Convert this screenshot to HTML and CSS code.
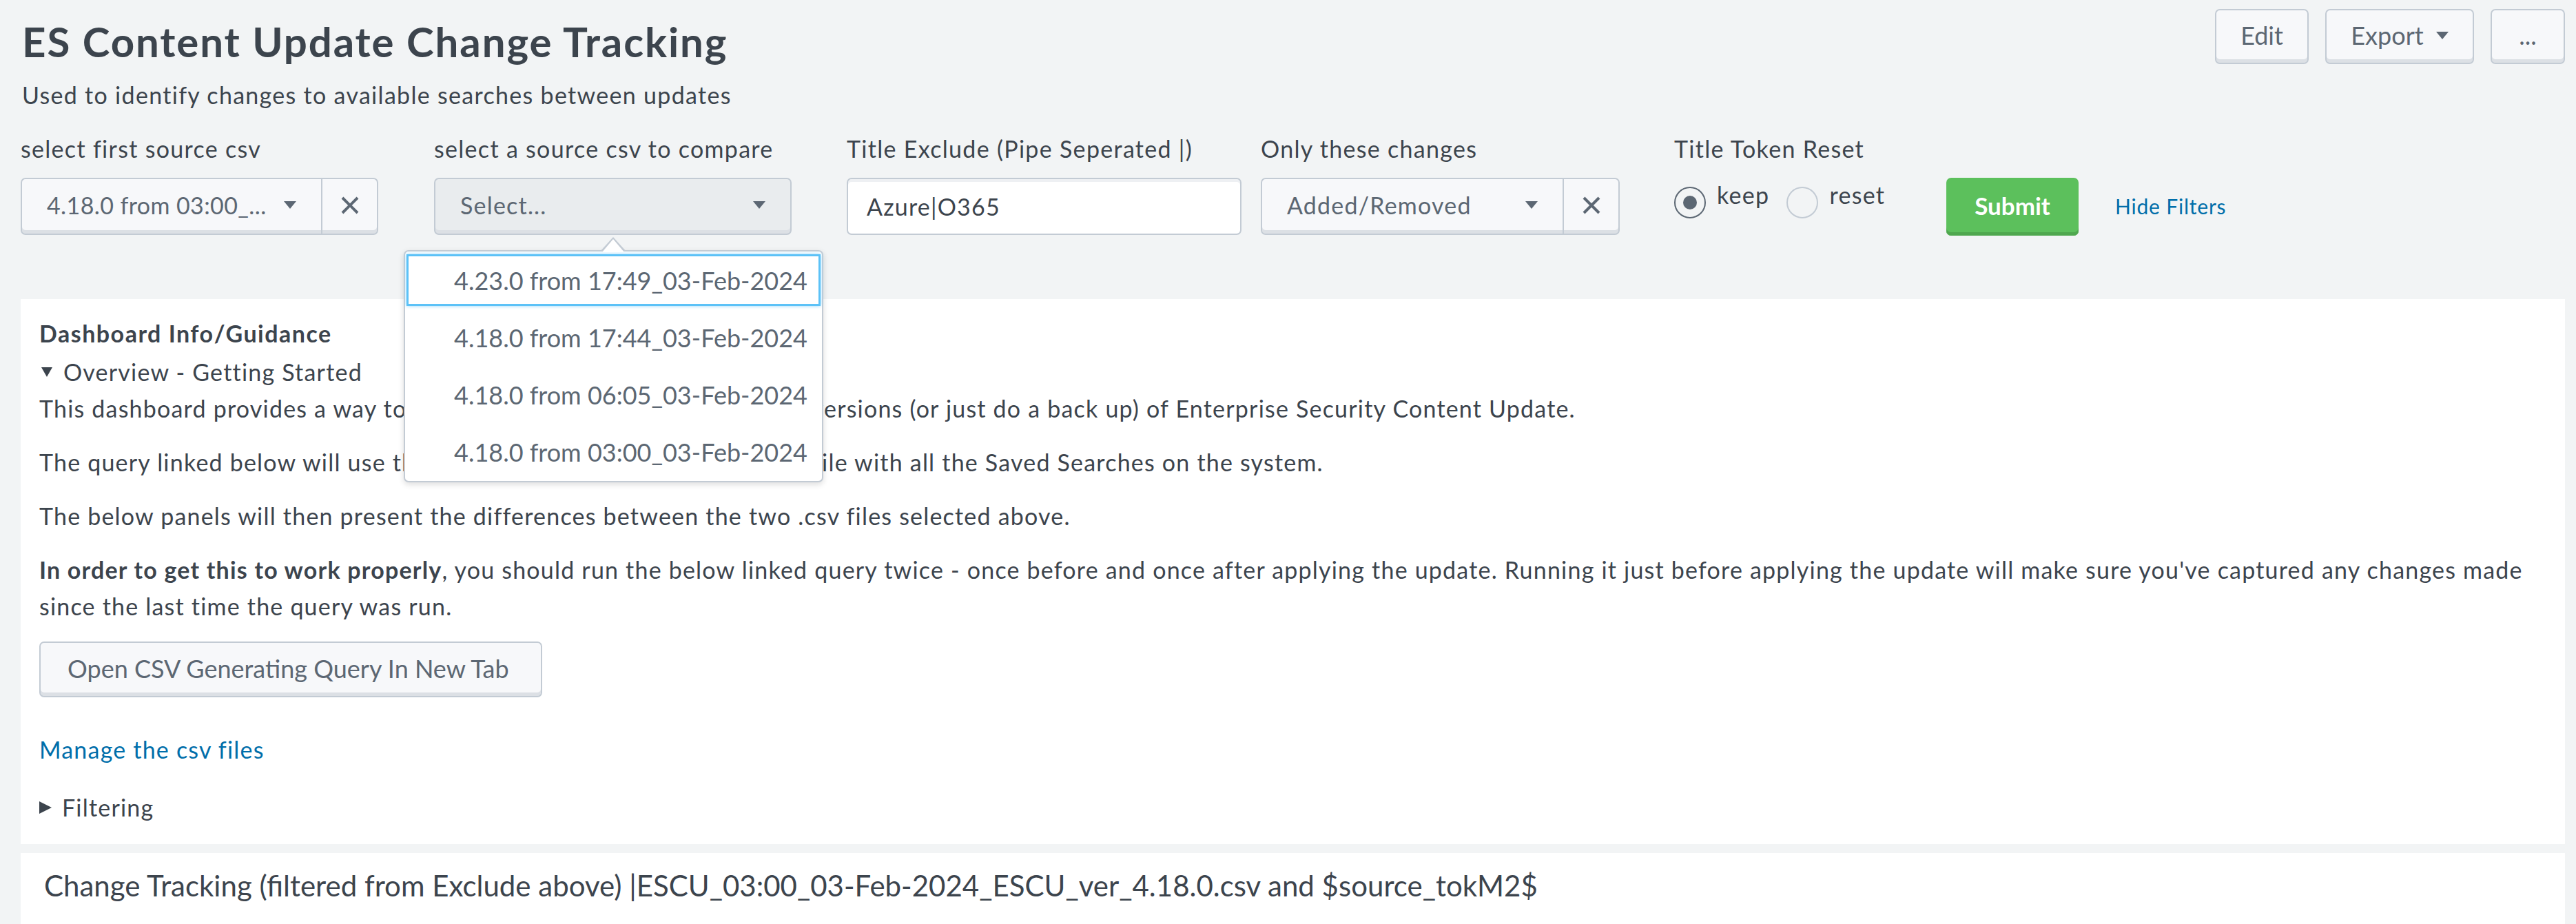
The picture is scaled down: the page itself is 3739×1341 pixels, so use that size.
FILE: index.html
```html
<!DOCTYPE html>
<html lang="en">
<head>
<meta charset="utf-8">
<title>ES Content Update Change Tracking</title>
<link rel="stylesheet" href="styles.css">
</head>
<body>
<div class="page">
  <header class="head">
    <div class="head-text">
      <h1 class="title">ES Content Update Change Tracking</h1>
      <p class="subtitle">Used to identify changes to available searches between updates</p>
    </div>
    <div class="actions">
      <button class="btn btn-edit">Edit</button>
      <button class="btn btn-export">Export <span class="caret"></span></button>
      <button class="btn btn-more">...</button>
    </div>
  </header>

  <div class="filters">
    <div class="field f1">
      <label class="flabel">select first source csv</label>
      <div class="select">
        <div class="sel-main"><span class="sel-text">4.18.0 from 03:00_...</span><span class="caret"></span></div>
        <div class="sel-clear"><svg width="28" height="28" viewBox="0 0 28 28"><path d="M3 3 L25 25 M25 3 L3 25" stroke="#5c6773" stroke-width="4" fill="none"/></svg></div>
      </div>
    </div>
    <div class="field f2">
      <label class="flabel">select a source csv to compare</label>
      <div class="select select-open">
        <div class="sel-main"><span class="sel-text">Select...</span><span class="caret"></span></div>
        <div class="popup">
          <ul class="opts">
            <li class="opt opt-active">4.23.0 from 17:49_03-Feb-2024</li>
            <li class="opt">4.18.0 from 17:44_03-Feb-2024</li>
            <li class="opt">4.18.0 from 06:05_03-Feb-2024</li>
            <li class="opt">4.18.0 from 03:00_03-Feb-2024</li>
          </ul>
        </div>
      </div>
    </div>
    <div class="field f3">
      <label class="flabel">Title Exclude (Pipe Seperated |)</label>
      <div class="text-input">Azure|O365</div>
    </div>
    <div class="field f4">
      <label class="flabel">Only these changes</label>
      <div class="select">
        <div class="sel-main"><span class="sel-text">Added/Removed</span><span class="caret"></span></div>
        <div class="sel-clear"><svg width="28" height="28" viewBox="0 0 28 28"><path d="M3 3 L25 25 M25 3 L3 25" stroke="#5c6773" stroke-width="4" fill="none"/></svg></div>
      </div>
    </div>
    <div class="field f5">
      <label class="flabel">Title Token Reset</label>
      <div class="radios">
        <span class="radio radio-on"></span><span class="rlabel">keep</span>
        <span class="radio"></span><span class="rlabel">reset</span>
      </div>
    </div>
    <button class="submit">Submit</button>
    <a class="hide-filters">Hide Filters</a>
  </div>

  <section class="panel panel-info">
    <h3 class="info-title">Dashboard Info/Guidance</h3>
    <div class="disclosure"><svg class="tri" width="16" height="16" viewBox="0 0 16 16"><path d="M0 1 H16 L8 15 Z" fill="#3c444d"/></svg>Overview - Getting Started</div>
    <p class="para">This dashboard provides a way to review the changes across different versions (or just do a back up) of Enterprise Security Content Update.</p>
    <p class="para">The query linked below will use the | rest command to generate a .csv file with all the Saved Searches on the system.</p>
    <p class="para">The below panels will then present the differences between the two .csv files selected above.</p>
    <p class="para"><strong>In order to get this to work properly</strong>, you should run the below linked query twice - once before and once after applying the update. Running it just before applying the update will make sure you've captured any changes made since the last time the query was run.</p>
    <button class="btn btn-open">Open CSV Generating Query In New Tab</button>
    <a class="manage">Manage the csv files</a>
    <div class="disclosure closed"><svg class="tri" width="18" height="18" viewBox="0 0 18 18"><path d="M0 0 V18 L18 9 Z" fill="#3c444d"/></svg>Filtering</div>
  </section>

  <section class="panel panel-track">
    <h2 class="track-title">Change Tracking (filtered from Exclude above) |ESCU_03:00_03-Feb-2024_ESCU_ver_4.18.0.csv and $source_tokM2$</h2>
  </section>
</div>
</body>
</html>
```

FILE: styles.css
```css
* { box-sizing: border-box; }
html, body { margin: 0; padding: 0; }
body {
  background: #f2f4f5;
  font-family: Lato, "Liberation Sans", sans-serif;
  color: #3c444d;
  font-size: 34px;
  letter-spacing: 1.2px;
}
.page {
  width: 3739px;
  height: 1341px;
  overflow: hidden;
  padding: 0 16px 0 30px;
}

/* header */
.head { display: flex; justify-content: space-between; align-items: flex-start; }
.head-text { padding: 24px 0 0 2px; }
.title { margin: 0; font-size: 60px; line-height: 72px; font-weight: 700; letter-spacing: 1.9px; }
.subtitle { margin: 22px 0 0; line-height: 40px; letter-spacing: 1.3px; }
.actions { display: flex; gap: 24px; padding-top: 13px; }

.btn {
  height: 80px;
  border: 2px solid #c3cbd4;
  border-radius: 7px;
  background: #f7f8fa;
  box-shadow: inset 0 -5px 0 #dce0e5;
  font-family: inherit;
  font-size: 36px;
  letter-spacing: 0;
  color: #5c6773;
  display: inline-flex;
  align-items: center;
  justify-content: center;
  padding: 0 0 4px;
  cursor: pointer;
}
.btn-edit { width: 136px; }
.btn-export { width: 216px; gap: 18px; }
.btn-more { width: 108px; }

.caret {
  display: inline-block;
  flex: none;
  width: 0; height: 0;
  border-left: 9px solid transparent;
  border-right: 9px solid transparent;
  border-top: 11px solid #5c6773;
}

/* filters */
.filters { display: flex; align-items: flex-start; margin-top: 38px; position: relative; z-index: 2; }
.field { display: flex; flex-direction: column; }
.flabel { display: block; line-height: 40px; margin-bottom: 22px; white-space: nowrap; letter-spacing: 1.3px; }
.f1 { width: 519px; margin-right: 81px; }
.f2 { width: 519px; margin-right: 80px; }
.f3 { width: 573px; margin-right: 28px; }
.f4 { width: 521px; margin-right: 79px; }
.f5 { width: 395px; }

.select {
  position: relative;
  display: flex;
  height: 83px;
  border: 2px solid #c3cbd4;
  border-radius: 7px;
  background: #f7f8fa;
  box-shadow: inset 0 -5px 0 #dce0e5;
  color: #5c6773;
}
.select-open { background: #e9ecee; }
.sel-main {
  flex: 1;
  display: flex;
  align-items: center;
  justify-content: space-between;
  padding: 0 36px 4px 36px;
  white-space: nowrap;
}
.f1 .sel-text { letter-spacing: 0.4px; }
.sel-clear {
  width: 81px;
  border-left: 2px solid #c3cbd4;
  display: flex;
  align-items: center;
  justify-content: center;
  padding-bottom: 4px;
}

.text-input {
  height: 83px;
  border: 2px solid #c3cbd4;
  border-radius: 7px;
  background: #fff;
  box-shadow: inset 0 4px 0 #eef0f3;
  display: flex;
  align-items: center;
  padding: 0 0 0 27px;
  color: #3c444d;
}

.radios { display: flex; align-items: flex-start; margin-top: 13px; }
.radio {
  flex: none;
  width: 46px; height: 46px;
  border: 2px solid #c3cbd4;
  border-radius: 50%;
  position: relative;
}
.radio-on { border-color: #5c6773; }
.radio-on::after {
  content: "";
  position: absolute;
  left: 11px; top: 11px;
  width: 20px; height: 20px;
  border-radius: 50%;
  background: #5c6773;
}
.rlabel { line-height: 24px; margin-left: 16px; letter-spacing: 1.3px; }
.radios .radio:nth-of-type(3) { margin-left: 25px; }

.submit {
  margin-top: 62px;
  width: 192px;
  height: 84px;
  border: none;
  border-radius: 7px;
  background: #5cc05c;
  box-shadow: inset 0 -5px 0 #4fa74f;
  color: #fff;
  font-family: inherit;
  font-weight: 700;
  font-size: 35px;
  letter-spacing: 0;
  padding: 0 0 4px;
}
.hide-filters {
  margin: 62px 0 0 53px;
  height: 84px;
  display: flex;
  align-items: center;
  color: #006eaa;
  font-size: 30px;
  letter-spacing: 0.8px;
  padding-bottom: 2px;
}

/* popup */
.popup {
  position: absolute;
  left: -46px;
  top: 103px;
  width: 609px;
  height: 337px;
  background: #fff;
  border: 2px solid #c3cbd4;
  border-radius: 7px;
  box-shadow: 0 3px 8px rgba(0, 0, 0, 0.14);
}
.popup::before, .popup::after {
  content: "";
  position: absolute;
  width: 0; height: 0;
}
.popup::before {
  top: -21px;
  left: 283px;
  border-left: 19px solid transparent;
  border-right: 19px solid transparent;
  border-bottom: 21px solid #c3cbd4;
}
.popup::after {
  top: -18px;
  left: 286px;
  border-left: 16px solid transparent;
  border-right: 16px solid transparent;
  border-bottom: 19px solid #fff;
}
.opts { list-style: none; margin: 0; padding: 0; }
.opt {
  height: 75px;
  margin: 4px 2px 8px;
  display: flex;
  align-items: center;
  padding-left: 69px;
  font-size: 36px;
  letter-spacing: 0;
  color: #5c6773;
  white-space: nowrap;
}
.opt-active {
  border: 3px solid #5cc2f7;
  box-shadow: 0 0 5px #8fd6fb;
  padding-left: 66px;
}

/* panels */
.panel { background: #fff; }
.panel-info { margin-top: 92px; padding: 23px 27px 27px; position: relative; z-index: 1; }
.info-title { margin: 0 0 3px; font-size: 34px; line-height: 53px; font-weight: 700; letter-spacing: 1.5px; }
.disclosure { display: flex; align-items: center; line-height: 53px; }
.disclosure .tri { margin: 0 16px 0 3px; }
.disclosure.closed .tri { margin: 0 15px 0 0; }
.para { margin: 0 0 25px; line-height: 53px; }
.para strong { font-weight: 700; }
.btn-open {
  margin-top: 3px;
  width: 730px;
  height: 81px;
  display: flex;
  justify-content: flex-start;
  padding-left: 39px;
}
.manage { display: block; margin-top: 49px; line-height: 53px; color: #006eaa; }
.panel-info .closed { margin-top: 31px; }

.panel-track { margin-top: 13px; padding: 21px 34px; height: 200px; }
.track-title { margin: 0; font-weight: 400; font-size: 42px; line-height: 52px; letter-spacing: 0; white-space: nowrap; }
```
